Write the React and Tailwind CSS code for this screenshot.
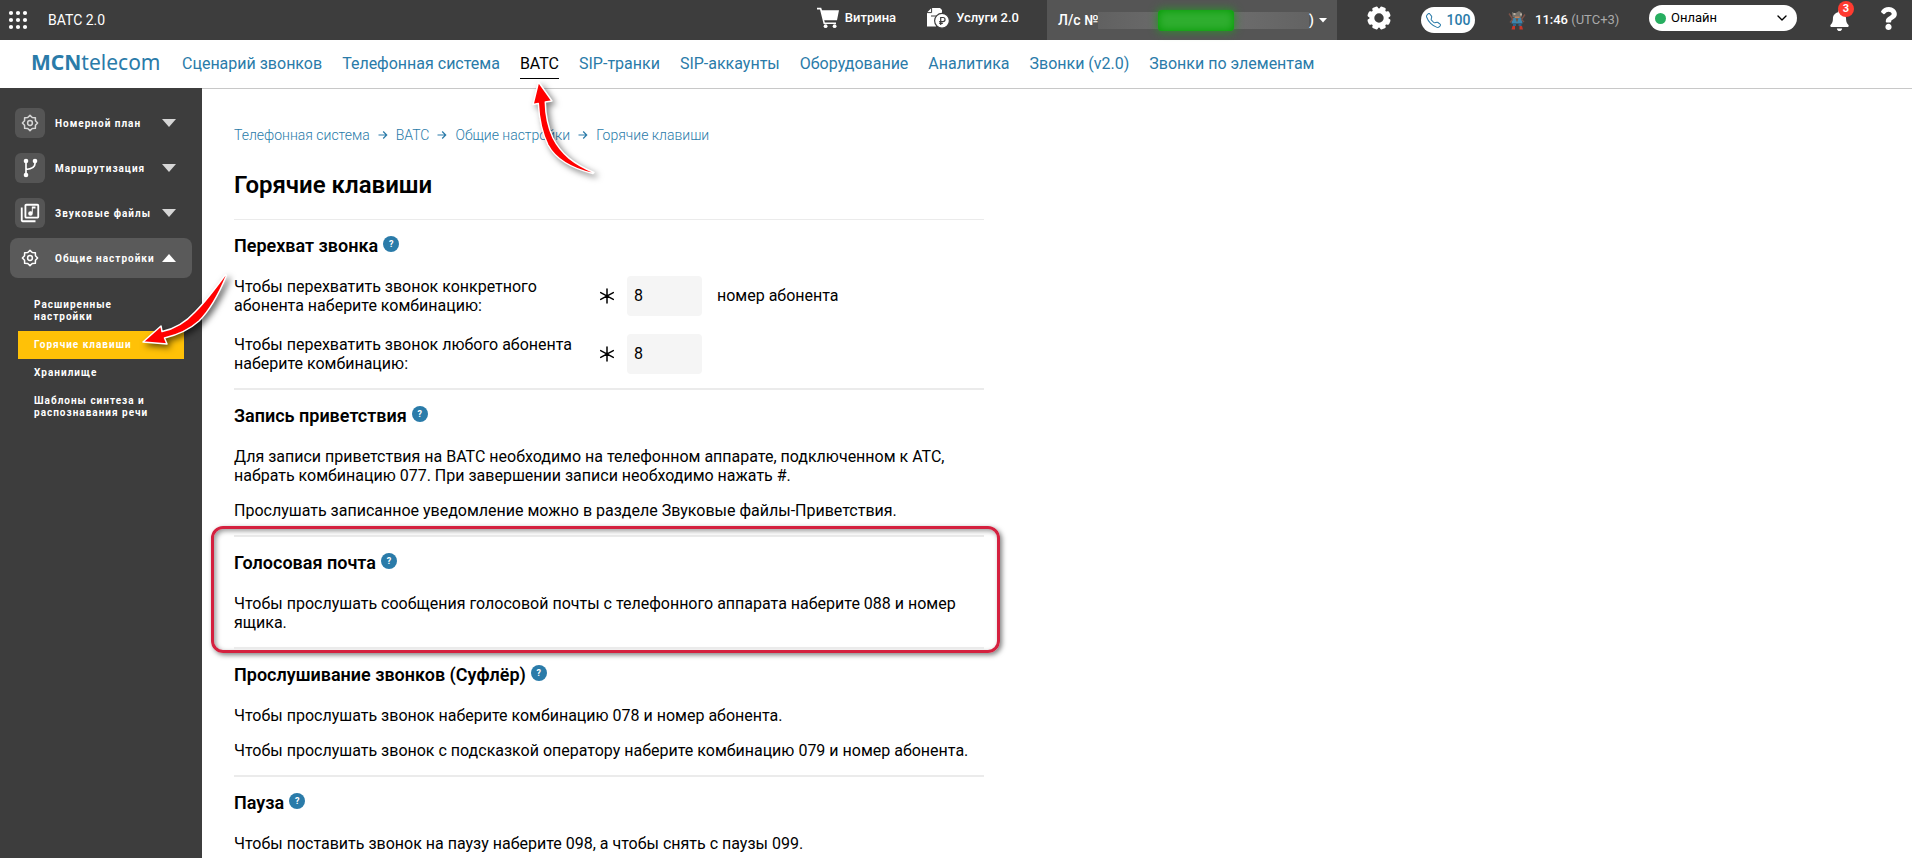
import React from "react";
import { BsTelephone } from "react-icons/bs";
import { FaQuestion, FaBell } from "react-icons/fa";
import { MdOutlineLibraryMusic } from "react-icons/md";
import { ChevronDown } from "lucide-react";

const navItems = [
  "Сценарий звонков",
  "Телефонная система",
  "ВАТС",
  "SIP-транки",
  "SIP-аккаунты",
  "Оборудование",
  "Аналитика",
  "Звонки (v2.0)",
  "Звонки по элементам",
];

const crumbs = ["Телефонная система", "ВАТС", "Общие настройки", "Горячие клавиши"];

const lobeAngles = [22.5, 67.5, 112.5, 157.5, 202.5, 247.5, 292.5, 337.5];

const cogPoints = Array.from({ length: 16 }, (_, i) => {
  const radius = i % 2 === 0 ? 7.6 : 5.9;
  const angle = (i * Math.PI) / 8;
  return `${(9 + radius * Math.sin(angle)).toFixed(2)},${(9 - radius * Math.cos(angle)).toFixed(2)}`;
}).join(" ");

function AppsIcon() {
  const at = [3, 10, 17];
  return (
    <svg width="20" height="20" viewBox="0 0 20 20" fill="white" aria-hidden="true">
      {at.map((y) => at.map((x) => <circle key={x + "-" + y} cx={x} cy={y} r="2.1" />))}
    </svg>
  );
}

function GearIcon() {
  return (
    <svg width="24" height="24" viewBox="0 0 24 24" fill="white" aria-hidden="true">
      <circle cx="12" cy="12" r="7.200" fill="none" stroke="white" strokeWidth="5" />
      {lobeAngles.map((a) => (
        <rect key={a} x="9" y="0.300" width="6" height="5" rx="1.600" transform={`rotate(${a} 12 12)`} />
      ))}
    </svg>
  );
}

function CogIcon() {
  return (
    <svg width="18" height="18" viewBox="0 0 18 18" fill="none" stroke="currentColor" aria-hidden="true">
      <polygon points={cogPoints} strokeWidth="1.500" strokeLinejoin="round" />
      <circle cx="9" cy="9" r="2.400" strokeWidth="1.500" />
    </svg>
  );
}

function CartIcon() {
  return (
    <svg width="22" height="22" viewBox="0 0 22 22" fill="white" aria-hidden="true">
      <path d="M0 .8h4.2L5 3.2h17L20 13.2H7.2l.7 2.2H19v1.7H6.6L3 2.5H0z" />
      <circle cx="8.6" cy="19.2" r="1.9" />
      <circle cx="17.6" cy="19.2" r="1.9" />
    </svg>
  );
}

function ServicesIcon() {
  return (
    <svg width="24" height="22" viewBox="0 0 24 22" aria-hidden="true">
      <path d="M5.5 1H14l2 2v5l-6 5v6.500H1V5.500z" fill="white" />
      <path d="M1 5.600h4.600V1M5 9h6" stroke="#3d3d3d" strokeWidth="1" fill="none" />
      <circle cx="16" cy="13.800" r="7.400" fill="white" stroke="#3d3d3d" strokeWidth="1.200" />
      <path
        d="M14.700 18v-7.500h2.300a2 2 0 0 1 0 4.100H13.200M13.200 16.300h3.600"
        stroke="#3d3d3d"
        strokeWidth="1.200"
        fill="none"
      />
    </svg>
  );
}

function AvatarIcon() {
  return (
    <svg width="18" height="20" viewBox="0 0 18 20" aria-hidden="true">
      <path d="M4 2l3 1.5L11 1l3 2-.5 4.500-4.500 1.500-4.500-2z" fill="#77736c" />
      <path d="M5.500 3h2v2h-2zM12 3.500h2v2h-2z" fill="#b9ada0" />
      <path d="M7 6.500h4.500v1.500H7z" fill="#c0855f" />
      <path d="M4.500 8h9l1 5.500h-11z" fill="#3d86ad" />
      <path d="M7.500 8.500h3l-1.500 4z" fill="#70513f" />
      <path d="M1 3.500l4 6M17 4.500l-3.500 5M2 12.500l2.500-3M16 12l-2.500-2.500" stroke="#7c5147" strokeWidth="1.400" />
      <path d="M5 13.500h3V16H5zM10.500 13.500h3V16h-3z" fill="#2d638c" />
      <path d="M4.500 16H7v3.500H3.500zM11.500 16h2.500l1 3.500h-3.500z" fill="#c8382b" />
    </svg>
  );
}

function BranchIcon() {
  return (
    <svg width="18" height="20" viewBox="0 0 18 20" aria-hidden="true">
      <path d="M5 3v14M14 3v2.500c0 4-3 5.500-9 6" stroke="white" strokeWidth="1.700" fill="none" />
      <circle cx="5" cy="3" r="2.300" fill="white" />
      <circle cx="14" cy="3" r="2.300" fill="white" />
      <circle cx="5" cy="17" r="2.300" fill="white" />
    </svg>
  );
}

function AsteriskIcon() {
  return (
    <svg width="16" height="16" viewBox="0 0 16 16" aria-hidden="true">
      <path
        d="M8 1v14M1.700 4.600l12.600 6.800M14.300 4.600L1.700 11.400"
        stroke="black"
        strokeWidth="1.500"
        strokeLinecap="round"
      />
    </svg>
  );
}

function CrumbArrow() {
  return (
    <svg width="10" height="10" viewBox="0 0 10 10" aria-hidden="true">
      <path d="M.5 5h8M5.200 1.500L8.700 5 5.200 8.500" stroke="#2a7ba9" strokeWidth="1.200" fill="none" />
    </svg>
  );
}

function PointerUp() {
  return (
    <svg
      className="pointer-events-none absolute top-[26px] left-[5px] z-10 drop-shadow-[3px_3px_3px_rgba(0,0,0,0.5)]"
      width="76"
      height="106"
      viewBox="0 0 76 106"
      aria-hidden="true"
    >
      <path
        d="M13.500 7L27 26L20.300 27C20.500 38 22 50 28 63C36 79 49 89 69 97.500L68 98.500C45 93 30 83 23 70C16 56 14 42 13.300 28.500L8 29.500Z"
        fill="#f00"
        stroke="white"
        strokeWidth="1.500"
        strokeLinejoin="round"
      />
    </svg>
  );
}

function PointerLeft() {
  return (
    <svg
      className="pointer-events-none absolute -top-[61px] left-[120px] z-10 drop-shadow-[3px_3px_3px_rgba(0,0,0,0.6)]"
      width="96"
      height="84"
      viewBox="0 0 96 84"
      aria-hidden="true"
    >
      <path
        d="M5 72L23 56L24 61.500C36 59 47 53 57 42C68 31 77 19 87.500 4.500L88.500 5.500C80 26 71 41 61 51C51 60 39 65 26.500 68L29 74Z"
        fill="#f00"
        stroke="white"
        strokeWidth="1.500"
        strokeLinejoin="round"
      />
    </svg>
  );
}

function Triangle({ up = false }) {
  return (
    <svg width="14" height="8" viewBox="0 0 14 8" aria-hidden="true">
      <path d={up ? "M0 8L7 0l7 8z" : "M0 0h14L7 8z"} fill={up ? "white" : "#d6d6d6"} />
    </svg>
  );
}

function TopBar() {
  return (
    <header className="flex h-10 items-center bg-[#3d3d3d] pr-3 pl-2 text-sm text-white">
      <button type="button" aria-label="Приложения">
        <AppsIcon />
      </button>
      <span className="ml-5">ВАТС 2.0</span>
      <div className="ml-auto flex h-full items-center">
        <a href="#showcase" className="flex items-center gap-1.5 pb-1 text-[13px] font-medium">
          <CartIcon />
          Витрина
        </a>
        <a href="#services" className="ml-[30px] flex items-center gap-1.5 pb-1 text-[13px] font-medium">
          <ServicesIcon />
          Услуги 2.0
        </a>
        <button
          type="button"
          className="ml-[28px] flex h-full w-[290px] items-center bg-[#555] pr-[10px] pl-[11px] text-sm font-medium"
        >
          <span className="whitespace-nowrap">Л/с №</span>
          <span className="flex h-[17px] flex-1 items-center bg-linear-to-r from-[#616161] via-[#707070] to-[#636363]">
            <span className="ml-[60px] h-[21px] w-[76px] rounded-sm bg-[#2fae2f] shadow-[0_0_8px_1px_#2c8f2c,inset_0_0_8px_#009a00]"></span>
          </span>
          <span>)</span>
          <svg className="ml-[5px]" width="8" height="5" viewBox="0 0 8 5" fill="white" aria-hidden="true">
            <path d="M0 0h8L4 4.500z" />
          </svg>
        </button>
        <button type="button" aria-label="Настройки" className="ml-[30px] pb-1">
          <GearIcon />
        </button>
        <button
          type="button"
          className="ml-[30px] flex h-[26px] w-[54px] items-center justify-center gap-1.5 rounded-full bg-white text-sm font-medium text-[#2a7ba9]"
        >
          <BsTelephone size={15} />
          100
        </button>
        <span className="ml-[33px]">
          <AvatarIcon />
        </span>
        <span className="ml-[9px] w-[86px] text-[13px] font-medium whitespace-nowrap">
          11:46 <span className="font-normal text-[#a9a9a9]">(UTC+3)</span>
        </span>
        <label className="relative ml-[28px] mb-1 flex h-[26px] w-[148px] items-center rounded-full bg-white text-black">
          <span className="absolute left-[6px] size-[11px] rounded-full bg-[#27ae60]"></span>
          <select
            aria-label="Статус"
            className="h-full w-full appearance-none rounded-full bg-transparent pl-[22px] text-[13px]"
          >
            <option>Онлайн</option>
          </select>
          <ChevronDown size={16} className="pointer-events-none absolute right-[7px]" />
        </label>
        <button type="button" aria-label="Уведомления" className="relative ml-[32px]">
          <FaBell size={21} />
          <span className="absolute -top-[9px] -right-[4px] flex size-4 items-center justify-center rounded-full bg-[#ff3b30] text-[11px] leading-none font-bold">
            3
          </span>
        </button>
        <button type="button" aria-label="Помощь" className="ml-[27px] pb-1">
          <FaQuestion size={23} />
        </button>
      </div>
    </header>
  );
}

function NavBar() {
  return (
    <nav className="flex h-12 items-center pl-[31px]">
      <a href="#home" className="w-[151px] pb-1 font-['Noto_Sans',sans-serif] text-[21px] leading-none text-[#2a7ba9]">
        <b>MCN</b>telecom
      </a>
      <ul className="flex items-center gap-5 text-base text-[#2a7ba9]">
        {navItems.map((item) => {
          const current = item === "ВАТС";
          return (
            <li key={item} className="relative">
              <a
                href="#section"
                aria-current={current ? "page" : undefined}
                className={
                  "block border-b pt-[3px] pb-0.5 " + (current ? "border-black text-black" : "border-transparent")
                }
              >
                {item}
              </a>
              {current && <PointerUp />}
            </li>
          );
        })}
      </ul>
    </nav>
  );
}

function MenuGroup({ icon, label, open = false }) {
  return (
    <button
      type="button"
      aria-expanded={open}
      className={
        "flex h-10 items-center rounded-lg pr-4 pl-[5px] text-[10px] font-bold tracking-widest " +
        (open ? "bg-[#5a5a5a]" : "")
      }
    >
      <span
        className={
          "flex size-[30px] items-center justify-center rounded-md " + (open ? "" : "bg-[#555] text-[#d6d6d6]")
        }
      >
        {icon}
      </span>
      <span className="ml-[10px] flex-1 text-left whitespace-nowrap">{label}</span>
      <Triangle up={open} />
    </button>
  );
}

function Sidebar() {
  return (
    <aside className="flex w-[202px] shrink-0 flex-col bg-[#3d3d3d] pt-[15px] text-white">
      <div className="flex flex-col gap-[5px] px-[10px]">
        <MenuGroup icon={<CogIcon />} label="Номерной план" />
        <MenuGroup icon={<BranchIcon />} label="Маршрутизация" />
        <MenuGroup icon={<MdOutlineLibraryMusic size={22} color="white" />} label="Звуковые файлы" />
        <MenuGroup icon={<CogIcon />} label="Общие настройки" open />
      </div>
      <ul className="mt-[13px] mr-[18px] ml-[18px] text-[10px] leading-3 font-bold tracking-widest">
        <li>
          <a href="#advanced" className="block px-4 py-2">
            Расширенные
            <br />
            настройки
          </a>
        </li>
        <li className="relative">
          <a href="#hotkeys" className="block bg-[#ffc107] px-4 py-2" aria-current="page">
            Горячие клавиши
          </a>
          <PointerLeft />
        </li>
        <li>
          <a href="#storage" className="block px-4 py-2">
            Хранилище
          </a>
        </li>
        <li>
          <a href="#templates" className="block px-4 py-2">
            Шаблоны синтеза и
            <br />
            распознавания речи
          </a>
        </li>
      </ul>
    </aside>
  );
}

function Section({ title, first = false, highlighted = false, children }) {
  return (
    <section
      className={"relative border-[#ebebeb] pt-[15px] pb-[14px] " + (first ? "border-t" : "border-t-2")}
    >
      <div className="mb-[19px] flex h-[22px] items-center gap-[5px]">
        <h2 className="text-lg leading-[22px] font-semibold">{title}</h2>
        <button
          type="button"
          aria-label="Справка"
          className="mb-1 flex size-4 items-center justify-center rounded-full bg-[#2a7ba9] text-[9px] leading-none font-bold text-white"
        >
          ?
        </button>
      </div>
      {children}
      {highlighted && (
        <div className="pointer-events-none absolute -top-[11px] -right-[16px] -bottom-[6px] -left-[23px] rounded-xl border-3 border-[#d4213f] shadow-[2px_2px_5px_rgba(0,0,0,0.5),inset_2px_2px_5px_rgba(0,0,0,0.4)]"></div>
      )}
    </section>
  );
}

function Paragraphs({ items }) {
  return (
    <div className="flex flex-col gap-4 py-px leading-[19px]">
      {items.map((text) => (
        <p key={text}>{text}</p>
      ))}
    </div>
  );
}

function KeyRow({ id, label, suffix }) {
  return (
    <div className="flex h-10 items-center">
      <label htmlFor={id} className="w-[365px] pr-5 leading-[19px]">
        {label}
      </label>
      <AsteriskIcon />
      <input id={id} defaultValue="8" className="ml-3 h-10 w-[75px] rounded bg-[#f5f5f5] px-[7px] pb-0.5" />
      {suffix && <span className="ml-[15px]">{suffix}</span>}
    </div>
  );
}

export default function App() {
  return (
    <div className="flex min-h-screen flex-col bg-white font-[Roboto,'Liberation_Sans',sans-serif] text-base text-black">
      <TopBar />
      <NavBar />
      <div className="flex flex-1">
        <Sidebar />
        <main className="flex-1 border-t border-[#c8c8c8] pl-8">
          <div className="max-w-[750px]">
            <ol className="mt-9 flex h-5 items-center gap-2 text-sm font-light text-[#2a7ba9]">
              {crumbs.map((crumb, i) => (
                <li key={crumb} className="flex items-center gap-2 whitespace-nowrap">
                  {i > 0 && <CrumbArrow />}
                  <a href="#crumb">{crumb}</a>
                </li>
              ))}
            </ol>
            <h1 className="mt-6 mb-[18px] text-2xl font-semibold">Горячие клавиши</h1>
            <Section title="Перехват звонка" first>
              <div className="flex flex-col gap-[18px]">
                <KeyRow
                  id="pickup-one"
                  label="Чтобы перехватить звонок конкретного абонента наберите комбинацию:"
                  suffix="номер абонента"
                />
                <KeyRow id="pickup-any" label="Чтобы перехватить звонок любого абонента наберите комбинацию:" />
              </div>
            </Section>
            <Section title="Запись приветствия">
              <Paragraphs
                items={[
                  "Для записи приветствия на ВАТС необходимо на телефонном аппарате, подключенном к АТС, набрать комбинацию 077. При завершении записи необходимо нажать #.",
                  "Прослушать записанное уведомление можно в разделе Звуковые файлы-Приветствия.",
                ]}
              />
            </Section>
            <Section title="Голосовая почта" highlighted>
              <Paragraphs
                items={[
                  "Чтобы прослушать сообщения голосовой почты с телефонного аппарата наберите 088 и номер ящика.",
                ]}
              />
            </Section>
            <Section title="Прослушивание звонков (Суфлёр)">
              <Paragraphs
                items={[
                  "Чтобы прослушать звонок наберите комбинацию 078 и номер абонента.",
                  "Чтобы прослушать звонок с подсказкой оператору наберите комбинацию 079 и номер абонента.",
                ]}
              />
            </Section>
            <div className="-mb-[14px]">
              <Section title="Пауза">
                <Paragraphs items={["Чтобы поставить звонок на паузу наберите 098, а чтобы снять с паузы 099."]} />
              </Section>
            </div>
          </div>
        </main>
      </div>
    </div>
  );
}
